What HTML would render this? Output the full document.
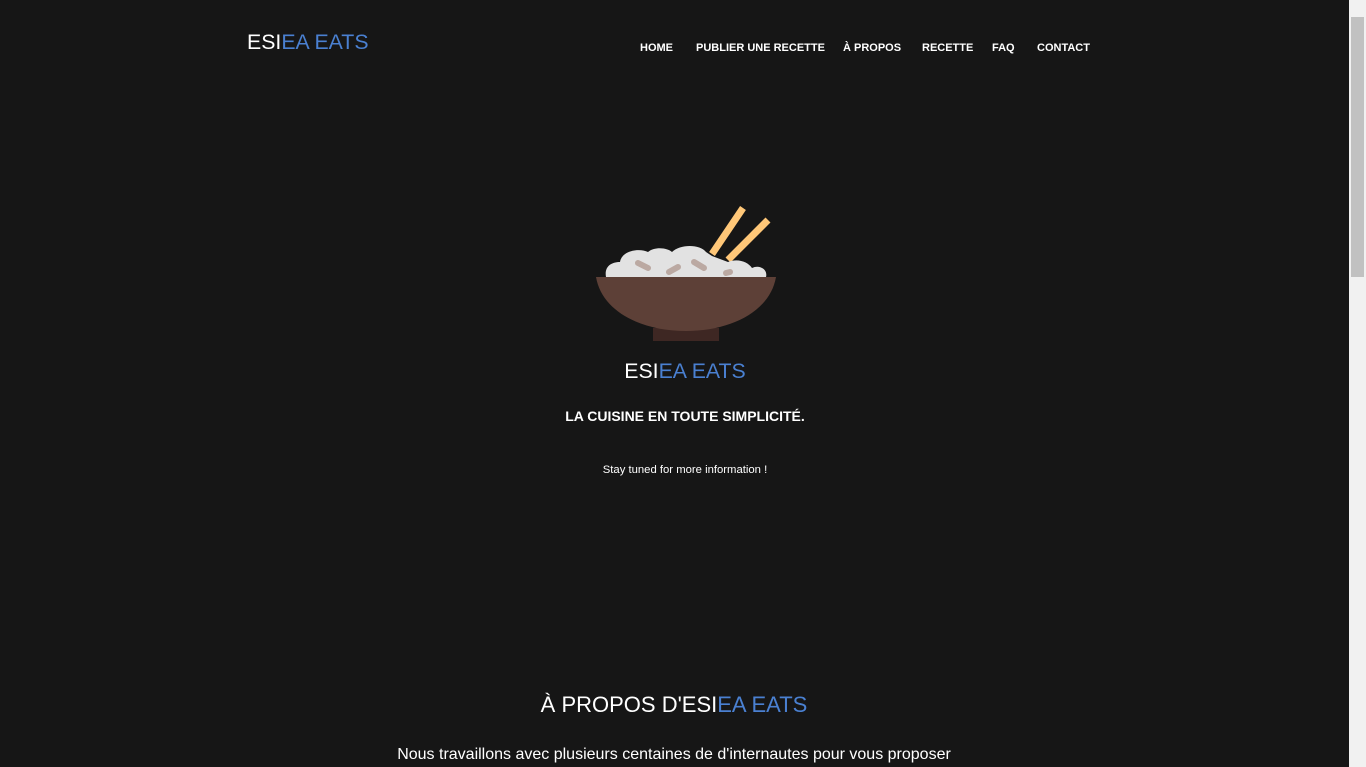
<!DOCTYPE html>
<html><head><meta charset="utf-8"><style>
html,body{margin:0;padding:0;background:#161616;overflow:hidden;}
body{width:1366px;height:767px;position:relative;font-family:"Liberation Sans","DejaVu Sans",sans-serif;color:#fff;}
.b{color:#4a80d1}
.logo{position:absolute;left:247px;top:30px;font-size:21.3px;}
nav{position:absolute;top:42px;left:640px;font-size:11px;font-weight:bold;}
nav span{position:absolute;white-space:nowrap}
.c{position:absolute;left:0;width:1370px;text-align:center}
.d{position:absolute;left:0;width:1348px;text-align:center}
.sb{position:absolute;right:0;top:0;width:17px;height:767px;background:#f1f1f1}
.sb div{position:absolute;left:2px;top:17px;width:13px;height:260px;background:#c1c1c1}
</style></head><body>
<div class="logo">ESI<span class="b">EA EATS</span></div>
<nav>
<span style="left:0">HOME</span>
<span style="left:56px">PUBLIER UNE RECETTE</span>
<span style="left:203px">À PROPOS</span>
<span style="left:282px">RECETTE</span>
<span style="left:352px">FAQ</span>
<span style="left:397px">CONTACT</span>
</nav>
<svg style="position:absolute;left:0;top:0" width="1349" height="767">
<g stroke="#ffc778" stroke-width="7" stroke-linecap="butt">
<line x1="743" y1="208" x2="712" y2="254"/>
<line x1="768" y1="220" x2="728" y2="260"/>
</g>
<path d="M606 277 C604 266 612 262 620 262 C622 250 640 248 648 252 C655 246 668 248 672 252 C680 244 700 244 706 252 L712 256 L728 262 C738 258 748 262 752 268 C760 264 768 270 766 277 Z" fill="#e2e2e2"/>
<g stroke="#bba9a2" stroke-width="6" stroke-linecap="round">
<line x1="638" y1="263" x2="648" y2="268"/><line x1="669" y1="272" x2="678" y2="267"/>
<line x1="694" y1="262" x2="704" y2="268"/><line x1="726" y1="273" x2="730" y2="272"/>
</g>
<rect x="653" y="328" width="66" height="13" fill="#3e2723"/>
<path d="M596 277 L776 277 C770 312 730 331 686 331 C642 331 602 312 596 277 Z" fill="#5d4037"/>
</svg>
<div class="c" style="top:359px;font-size:21.3px">ESI<span class="b">EA EATS</span></div>
<div class="c" style="top:408px;font-size:14px;font-weight:bold">LA CUISINE EN TOUTE SIMPLICITÉ.</div>
<div class="c" style="top:464px;font-size:11.3px">Stay tuned for more information !</div>
<div class="d" style="top:692px;font-size:22px">À PROPOS D'ESI<span class="b">EA EATS</span></div>
<div class="d" style="top:746px;font-size:16px">Nous travaillons avec plusieurs centaines de d'internautes pour vous proposer</div>
<div class="sb"><div></div></div>
</body></html>
